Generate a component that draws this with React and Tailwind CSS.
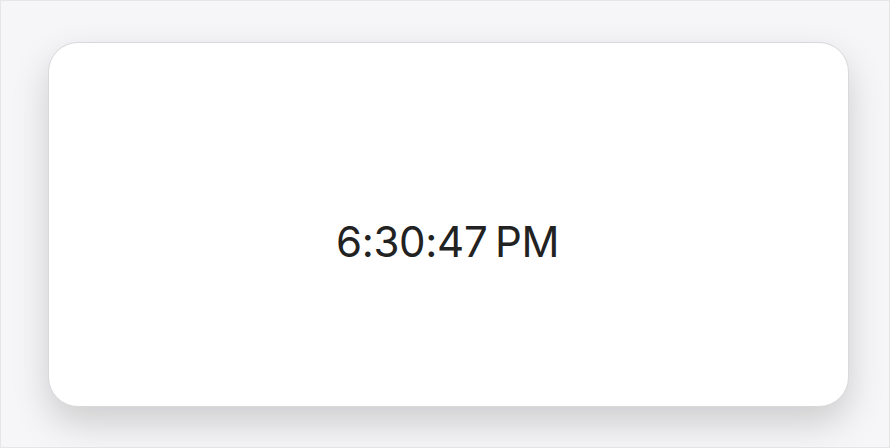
export default function App() {
  return (
    <div className="w-[890px] h-[448px] bg-[#f6f6f8] border border-[#e6e6e8] flex items-start justify-start pl-[47px] pt-[41px]">
      <div className="w-[801px] h-[365px] bg-white rounded-[30px] border border-[#d9d9dc] shadow-[0_16px_36px_rgba(0,0,0,0.17)] flex items-center justify-center pt-[34px] pr-[2px]">
        <span className="text-[42px] text-[#222] tracking-[-0.3px] [word-spacing:-4px]" style={{ fontFamily: 'Inter, "Noto Sans", sans-serif' }}>
          6:30:47 PM
        </span>
      </div>
    </div>
  );
}
